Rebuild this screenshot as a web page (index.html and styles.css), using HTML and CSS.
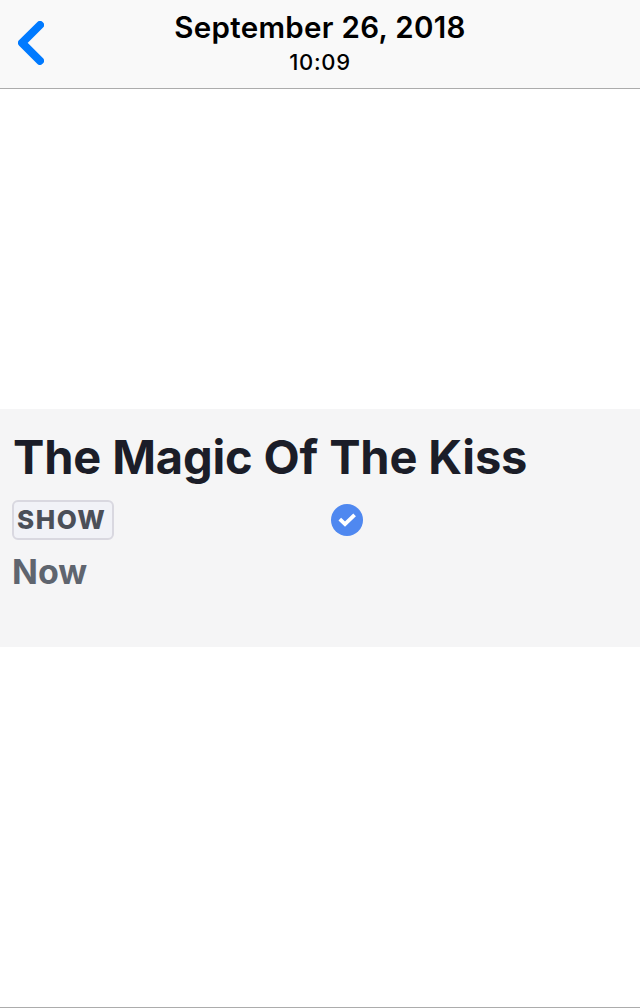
FILE: index.html
```html
<!doctype html>
<html lang="en">
  <head>
    <meta charset="utf-8">
    <meta name="viewport" content="width=device-width, initial-scale=1">
    <title>September 26, 2018</title>
    <link rel="stylesheet" href="styles.css">
  </head>
  <body>
    <header class="navbar">
      <a class="navbar__back" href="#" aria-label="Back">
        <svg width="26" height="44" viewBox="0 0 26 44">
          <path d="M22 4L4 21.9L22 39.8"/>
        </svg>
      </a>
      <div class="navbar__title">
        <h1 class="date">September 26, 2018</h1>
        <div class="time">10:09</div>
      </div>
    </header>
    <main class="viewer">
      <section class="photo">
        <h2 class="photo__title">The Magic Of The Kiss</h2>
        <div class="photo__row">
          <span class="tag">SHOW</span>
          <svg class="check" width="32" height="32" viewBox="0 0 32 32">
            <circle cx="16" cy="16" r="16"/>
            <path d="M8.8 15.2L14 20.2L23.6 10.8"/>
          </svg>
        </div>
        <div class="photo__when">Now</div>
      </section>
    </main>
  </body>
</html>
```

FILE: styles.css
```css
body{
  margin: 0;
  height: 1008px;
  display: flex;
  flex-direction: column;
  background: #fff;
  font-family: Inter, "Liberation Sans", sans-serif;
}
h1, h2{
  margin: 0;
}
/*--------------------------*/
.navbar{
  display: grid;
  grid-template-columns: 60px 1fr 60px;
  box-sizing: border-box;
  height: 89px;
  background: #f9f9f9;
  border-bottom: 1px solid #acacac;
}
.navbar__back{
  padding: 21px 0 0 18px;
}
.navbar__back svg{
  display: block;
}
.navbar__back path{
  fill: none;
  stroke: #007aff;
  stroke-width: 8;
  stroke-linecap: round;
  stroke-linejoin: round;
}
.navbar__title{
  padding-top: 9px;
  text-align: center;
  color: #000;
}
.date{
  font-size: 29.5px;
  font-weight: 600;
  letter-spacing: 0.3px;
  line-height: 36px;
}
.time{
  margin-top: 4px;
  font-size: 22px;
  font-weight: 550;
  letter-spacing: 0.65px;
  line-height: 26px;
}
/*--------------------------*/
.viewer{
  flex: 1;
  padding-top: 320px;
  border-bottom: 1px solid #acacac;
}
.photo{
  box-sizing: border-box;
  height: 238px;
  padding: 20px 12px 0;
  background: #f5f5f6;
}
.photo__title{
  padding-left: 1px;
  font-size: 47px;
  font-weight: 700;
  letter-spacing: -0.15px;
  line-height: 56px;
  color: #1b1d28;
  white-space: nowrap;
}
.photo__row{
  display: flex;
  align-items: center;
  margin-top: 15px;
}
.tag{
  box-sizing: border-box;
  width: 102px;
  height: 40px;
  padding-left: 3px;
  border: 2px solid #d9d8e0;
  border-radius: 6px;
  background: #f1f2f7;
  font-size: 26px;
  font-weight: 800;
  letter-spacing: 1.5px;
  line-height: 36px;
  color: #4b4f58;
}
.check{
  margin-left: 217px;
}
.check circle{
  fill: #4f88f0;
}
.check path{
  fill: none;
  stroke: #fff;
  stroke-width: 3.8;
}
.photo__when{
  margin-top: 11px;
  font-size: 34px;
  font-weight: 700;
  line-height: 42px;
  color: #5f656f;
}
```
